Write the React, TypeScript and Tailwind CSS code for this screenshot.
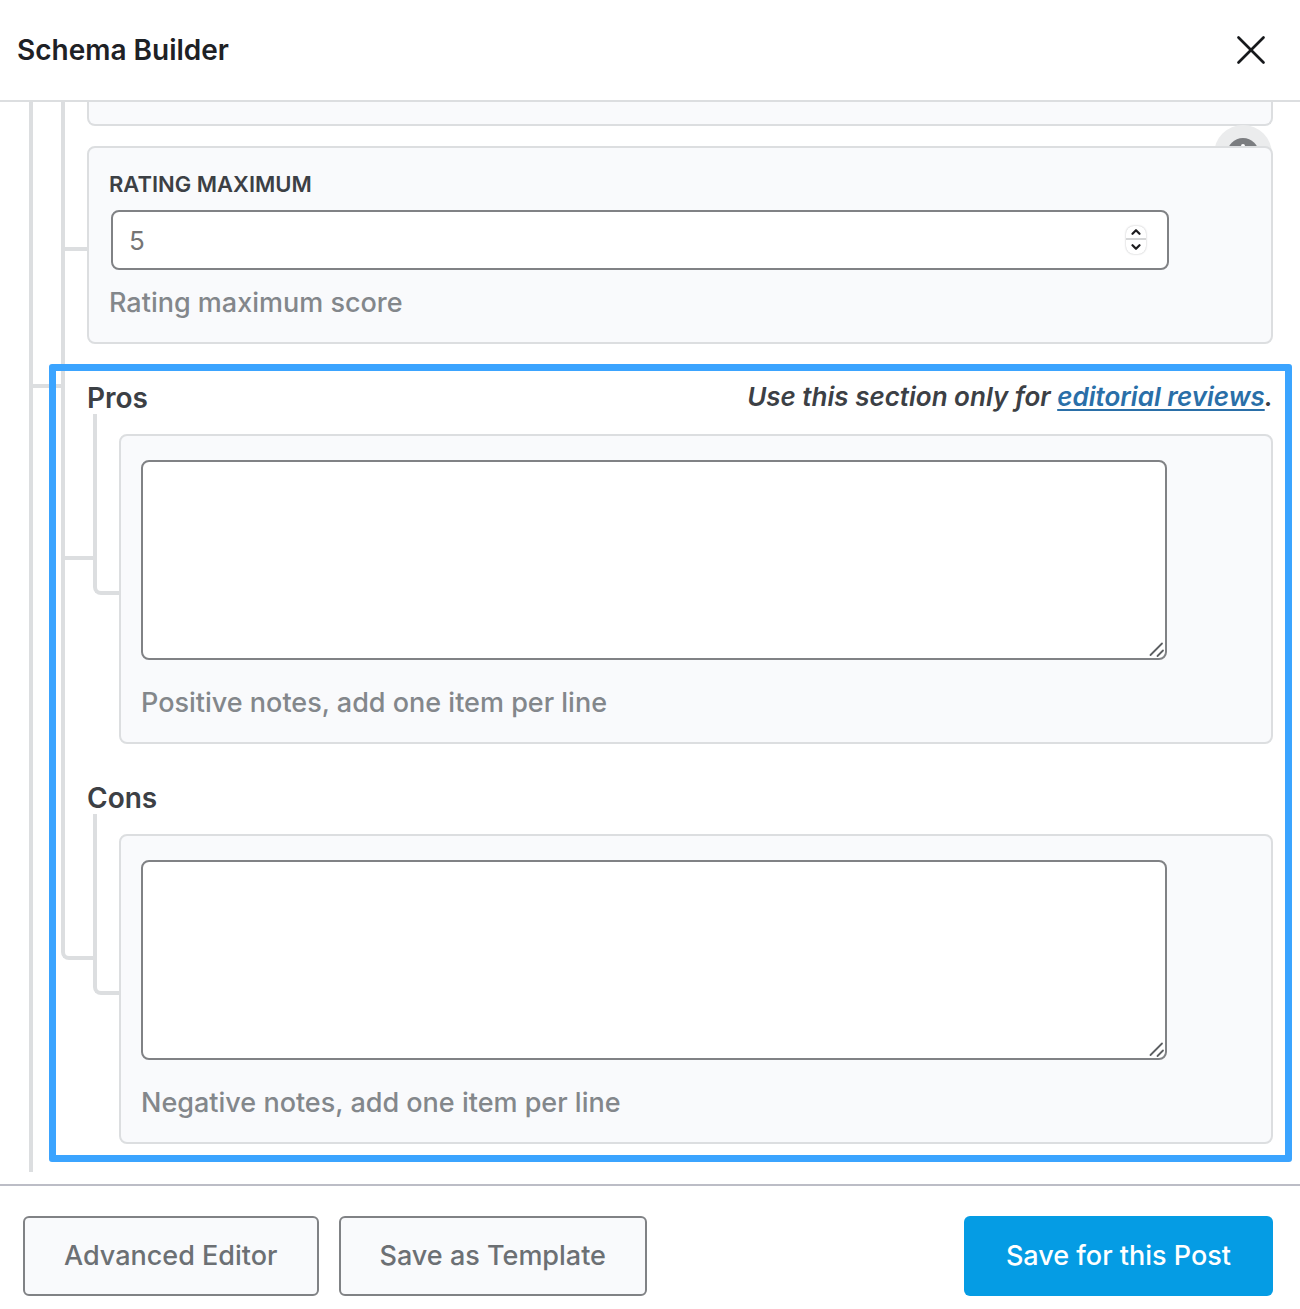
import { X } from "lucide-react";
import { useState } from "react";
import type { ReactNode } from "react";

const hintClass = "text-[27px] leading-[36px] font-medium text-[#83878b]";
const outlineButtonClass =
  "h-20 rounded-md border-2 border-[#808285] bg-[#f9fafc] px-[39px] text-[27px] font-medium text-[#6c7074]";

function ResizeGrip() {
  return (
    <svg className="pointer-events-none absolute right-[2px] bottom-[2px] h-4 w-4" viewBox="0 0 16 16" fill="none" stroke="#5c5f62" strokeWidth="1.800" strokeLinecap="round">
      <path d="M1.500 13 13 1.500M8.500 14 14 8.500" />
    </svg>
  );
}

type NotesFieldProps = {
  id: string;
  title: string;
  hint: string;
  last?: boolean;
  aside?: ReactNode;
};

function NotesField({ id, title, hint, last, aside }: NotesFieldProps) {
  const [value, setValue] = useState("");

  return (
    <div className="flex">
      <div className="-mr-[6px] flex w-8 shrink-0 flex-col">
        <div className={last ? "h-[196px] rounded-bl-lg border-b-4 border-l-4 border-[#dcdee0]" : "h-[196px] border-b-4 border-l-4 border-[#dcdee0]"} />
        {!last && <div className="flex-1 border-l-4 border-[#dcdee0]" />}
      </div>
      <div className="min-w-0 flex-1 pb-5">
        <div className="flex h-[50px] items-end justify-between">
          <label htmlFor={id} className="text-[28px] leading-[32px] font-semibold text-[#3c4045]">
            {title}
          </label>
          {aside}
        </div>
        <div className="flex items-start">
          <div className="ml-[6px] h-[181px] w-[26px] shrink-0 rounded-bl-lg border-b-4 border-l-4 border-[#dcdee0]" />
          <div className="mt-5 min-w-0 flex-1 rounded-lg border-2 border-[#dcdee0] bg-[#f9fafc] pt-6 pr-[104px] pb-[21px] pl-5">
            <div className="relative">
              <textarea
                id={id}
                value={value}
                onChange={(e) => setValue(e.target.value)}
                className="block h-[200px] w-full resize-none rounded-lg border-2 border-[#808285] bg-white px-4 py-3 text-[27px] outline-none"
              />
              <ResizeGrip />
            </div>
            <p className={"mt-[25px] " + hintClass}>{hint}</p>
          </div>
        </div>
      </div>
    </div>
  );
}

export default function App() {
  const [rating, setRating] = useState("");

  function step(amount: number) {
    setRating(String(Number(rating || 5) + amount));
  }

  return (
    <div className="flex min-h-screen flex-col overflow-hidden bg-white font-['Inter',sans-serif]">
      <header className="flex h-[102px] items-center justify-between border-b-2 border-[#dcdee0] pr-6 pl-[17px]">
        <h1 className="text-[28px] font-semibold text-[#1e2125]">Schema Builder</h1>
        <button type="button" aria-label="Close">
          <X className="h-[50px] w-[50px] text-[#17191c]" strokeWidth={1.3} />
        </button>
      </header>

      <main className="pr-[27px] pb-3 pl-[29px]">
        <div className="flex">
          <div className="flex w-8 shrink-0 flex-col">
            <div className="h-[286px] border-b-4 border-l-4 border-[#dcdee0]" />
            <div className="flex-1 border-l-4 border-[#dcdee0]" />
          </div>

          <div className="min-w-0 flex-1 pb-2">
            <div className="flex">
              <div className="flex w-[26px] shrink-0 flex-col">
                <div className="h-[149px] border-b-4 border-l-4 border-[#dcdee0]" />
                <div className="flex-1 border-l-4 border-[#dcdee0]" />
              </div>
              <div className="min-w-0 flex-1 pb-5">
                <div className="relative h-6 rounded-b-lg border-2 border-t-0 border-[#dcdee0] bg-[#f9fafc]">
                  <button type="button" aria-label="Add property" className="absolute top-[23px] -right-[1px] h-[58px] w-[58px] rounded-full bg-[#ebeced]">
                    <svg className="mx-auto h-8 w-8" viewBox="0 0 32 32" fill="none">
                      <circle cx="16" cy="16" r="16" fill="#7b7d80" />
                      <path d="M16 8v16M8 16h16" stroke="#fff" strokeWidth="4" strokeLinecap="round" />
                    </svg>
                  </button>
                </div>

                <div className="relative mt-5 rounded-lg border-2 border-[#dcdee0] bg-[#f9fafc] pt-5 pr-[102px] pb-[21px] pl-5">
                  <label htmlFor="rating-maximum" className="block text-[22px] leading-[32px] font-semibold text-[#3c4045] uppercase">
                    Rating Maximum
                  </label>
                  <div className="mt-[10px] ml-[2px] flex h-[60px] items-center rounded-lg border-2 border-[#808285] bg-white pr-[21px] pl-4">
                    <input
                      id="rating-maximum"
                      type="number"
                      placeholder="5"
                      value={rating}
                      onChange={(e) => setRating(e.target.value)}
                      className="min-w-0 flex-1 [appearance:textfield] bg-transparent text-[26px] text-[#3c4045] outline-none placeholder:text-[#757575] [&::-webkit-inner-spin-button]:appearance-none"
                    />
                    <div className="flex w-5 flex-col divide-y-2 divide-[#d5d6d7] rounded-lg bg-white shadow-[0_0_2px_0px_#b5b6b8]">
                      <button type="button" aria-label="Increase" onClick={() => step(1)} className="flex h-[14px] items-center justify-center">
                        <svg className="h-[6px] w-[10px]" viewBox="0 0 10 6" fill="none" stroke="#1d1d1f" strokeWidth="2.200" strokeLinecap="round" strokeLinejoin="round">
                          <path d="M1.500 4.800 5 1.200 8.500 4.800" />
                        </svg>
                      </button>
                      <button type="button" aria-label="Decrease" onClick={() => step(-1)} className="flex h-[14px] items-center justify-center">
                        <svg className="h-[6px] w-[10px]" viewBox="0 0 10 6" fill="none" stroke="#1d1d1f" strokeWidth="2.200" strokeLinecap="round" strokeLinejoin="round">
                          <path d="M1.500 1.200 5 4.800 8.500 1.200" />
                        </svg>
                      </button>
                    </div>
                  </div>
                  <p className={"mt-[15px] " + hintClass}>Rating maximum score</p>
                </div>
              </div>
            </div>

            <section className="relative">
              <NotesField
                id="pros"
                title="Pros"
                hint="Positive notes, add one item per line"
                aside={
                  <p className="text-[26px] leading-[34px] font-semibold text-[#3c4045] italic">
                    Use this section only for{" "}
                    <a href="#editorial-reviews" className="text-[#2a6fa8] underline decoration-2 underline-offset-3">
                      editorial reviews
                    </a>
                    .
                  </p>
                }
              />
              <NotesField id="cons" title="Cons" hint="Negative notes, add one item per line" last />
              <div className="pointer-events-none absolute top-0 -right-[19px] bottom-[2px] -left-3 rounded-[3px] border-[7px] border-[#3ba4ff]" />
            </section>
          </div>
        </div>
      </main>

      <footer className="flex flex-1 items-start gap-5 border-t-2 border-[#bcbdc6] pt-[30px] pr-[27px] pb-3 pl-[23px]">
        <button type="button" className={outlineButtonClass}>
          Advanced Editor
        </button>
        <button type="button" className={outlineButtonClass}>
          Save as Template
        </button>
        <button type="button" className="ml-auto h-20 rounded-md bg-[#059ce4] px-[42px] text-[27px] font-medium text-white">
          Save for this Post
        </button>
      </footer>
    </div>
  );
}
